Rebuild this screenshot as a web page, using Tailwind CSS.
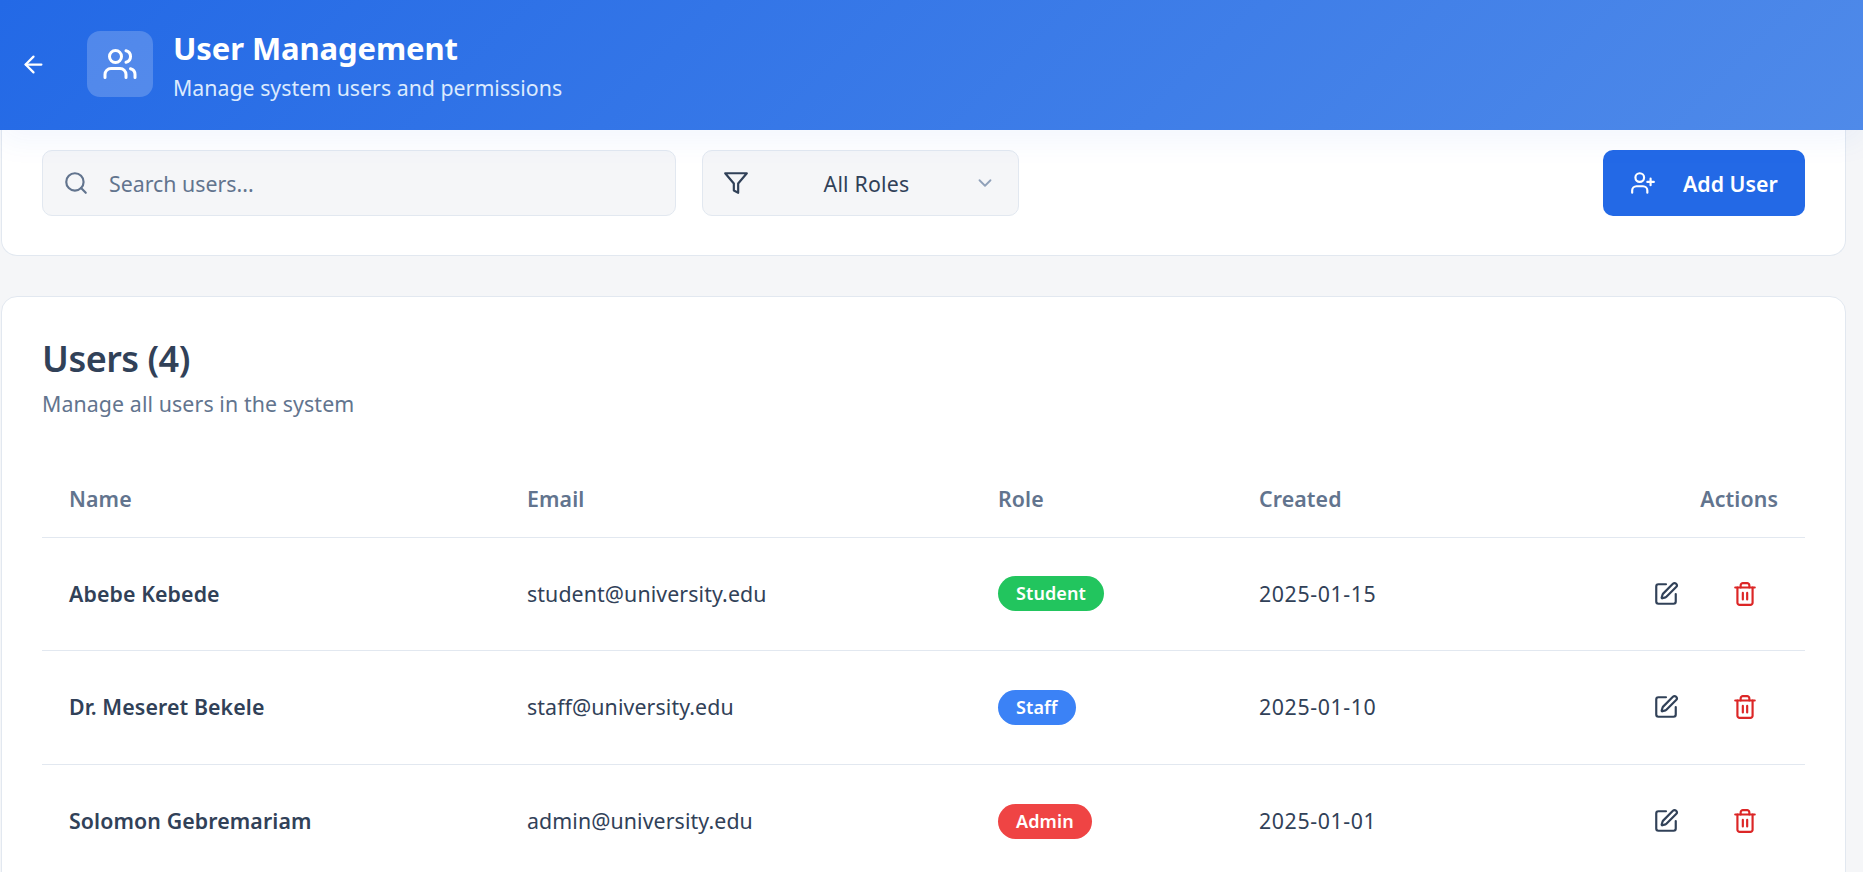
<!DOCTYPE html>
<html lang="en">
<head>
  <meta charset="UTF-8" />
  <title>User Management</title>
  <script src="https://cdn.jsdelivr.net/npm/@tailwindcss/browser@4"></script>
</head>
<body class="bg-[#f5f6f8] h-screen overflow-hidden font-['Noto_Sans',sans-serif] text-slate-700">
  <header class="relative z-10 h-[130px] pb-[2px] flex items-center bg-[linear-gradient(135deg,#2369e6,#4f8ae9)] shadow-[0_10px_30px_rgba(37,99,235,0.06)] text-white">
    <button class="w-[27px] ml-[20px] text-white">
      <svg class="w-[27px] h-[27px]" viewBox="0 0 24 24" fill="none" stroke="currentColor" stroke-width="2" stroke-linecap="round" stroke-linejoin="round"><path d="m12 19-7-7 7-7"/><path d="M19 12H5"/></svg>
    </button>
    <div class="ml-[40px] w-[66px] h-[66px] rounded-[13px] bg-white/20 flex items-center justify-center">
      <svg class="w-[36px] h-[36px]" viewBox="0 0 24 24" fill="none" stroke="currentColor" stroke-width="2" stroke-linecap="round" stroke-linejoin="round"><path d="M16 21v-2a4 4 0 0 0-4-4H6a4 4 0 0 0-4 4v2"/><circle cx="9" cy="7" r="4"/><path d="M22 21v-2a4 4 0 0 0-3-3.87"/><path d="M16 3.13a4 4 0 0 1 0 7.75"/></svg>
    </div>
    <div class="ml-[20px] pt-[3px]">
      <h1 class="text-[31px] leading-[38px] font-bold tracking-[-0.1px]">User Management</h1>
      <p class="text-[21.33px] leading-[30px] mt-[6px] text-[#dbeafe]">Manage system users and permissions</p>
    </div>
  </header>

  <main class="pl-[1px] pr-[17px]">
    <section class="bg-white border border-t-0 border-[#e2e8f0] rounded-b-[16px] h-[126px] pt-[20px] px-[40px] flex items-start">
      <div class="w-[634px] h-[66px] bg-[#f5f6f8] border border-[#e2e8f0] rounded-[10px] flex items-center pl-[20px]">
        <svg class="w-[26px] h-[26px] text-slate-500" viewBox="0 0 24 24" fill="none" stroke="currentColor" stroke-width="2" stroke-linecap="round" stroke-linejoin="round"><circle cx="11" cy="11" r="8"/><path d="m21 21-4.3-4.3"/></svg>
        <span class="ml-[20px] mt-[2px] text-[21.33px] text-slate-500">Search users...</span>
      </div>
      <div class="ml-[26px] w-[317px] h-[66px] bg-[#f5f6f8] border border-[#e2e8f0] rounded-[10px] flex items-center pl-[20px] pr-[22px]">
        <svg class="w-[26px] h-[26px]" viewBox="0 0 24 24" fill="none" stroke="currentColor" stroke-width="2" stroke-linecap="round" stroke-linejoin="round"><polygon points="22 3 2 3 10 12.46 10 19 14 21 14 12.46 22 3"/></svg>
        <span class="flex-1 mt-[2px] text-center text-[21.33px] pl-[10px] tracking-[0.2px]">All Roles</span>
        <svg class="w-[22px] h-[22px] text-slate-400" viewBox="0 0 24 24" fill="none" stroke="currentColor" stroke-width="2" stroke-linecap="round" stroke-linejoin="round"><path d="m6 9 6 6 6-6"/></svg>
      </div>
      <button class="ml-auto w-[202px] h-[66px] bg-[#2369e6] rounded-[10px] text-white flex items-center pl-[27px]">
        <svg class="w-[26px] h-[26px]" viewBox="0 0 24 24" fill="none" stroke="currentColor" stroke-width="2" stroke-linecap="round" stroke-linejoin="round"><path d="M16 21v-2a4 4 0 0 0-4-4H6a4 4 0 0 0-4 4v2"/><circle cx="9" cy="7" r="4"/><path d="M19 8v6"/><path d="M22 11h-6"/></svg>
        <span class="ml-[27px] mt-[2px] text-[21.33px] font-semibold">Add User</span>
      </button>
    </section>

    <section class="mt-[40px] bg-white border border-[#e2e8f0] rounded-[16px] h-[700px] pt-[40px] px-[40px]">
      <h2 class="text-[36px] leading-[44px] font-semibold tracking-[-0.5px]">Users (4)</h2>
      <p class="text-[21.33px] leading-[30px] mt-[8px] text-slate-500 tracking-[0.1px]">Manage all users in the system</p>

      <table class="mt-[42px] w-full table-fixed text-left text-[21.33px] tracking-[0.1px]">
        <colgroup>
          <col class="w-[458px]" />
          <col class="w-[471px]" />
          <col class="w-[261px]" />
          <col class="w-[300px]" />
          <col />
        </colgroup>
        <thead>
          <tr class="h-[76px] border-b border-[#e2e8f0] text-slate-500">
            <th class="pl-[27px] font-semibold">Name</th>
            <th class="pl-[27px] font-semibold">Email</th>
            <th class="pl-[27px] font-semibold">Role</th>
            <th class="pl-[27px] font-semibold">Created</th>
            <th class="pr-[27px] text-right font-semibold">Actions</th>
          </tr>
        </thead>
        <tbody>
          <tr class="h-[113px] border-b border-[#e2e8f0]">
            <td class="pl-[27px] font-semibold">Abebe Kebede</td>
            <td class="pl-[27px]">student@university.edu</td>
            <td class="pl-[27px]"><span class="inline-block rounded-full bg-[#22c55e] text-white text-[18px] leading-[35px] font-semibold px-[18px]">Student</span></td>
            <td class="pl-[27px] tracking-[0.6px]">2025-01-15</td>
            <td>
              <div class="flex justify-end gap-[53px] pr-[47px]">
                <svg class="w-[26px] h-[26px]" viewBox="0 0 24 24" fill="none" stroke="currentColor" stroke-width="2" stroke-linecap="round" stroke-linejoin="round"><path d="M12 3H5a2 2 0 0 0-2 2v14a2 2 0 0 0 2 2h14a2 2 0 0 0 2-2v-7"/><path d="M18.375 2.625a1 1 0 0 1 3 3l-9.013 9.014a2 2 0 0 1-.853.505l-2.873.84a.5.5 0 0 1-.62-.62l.84-2.873a2 2 0 0 1 .506-.852z"/></svg>
                <svg class="w-[26px] h-[26px] text-[#dc2626]" viewBox="0 0 24 24" fill="none" stroke="currentColor" stroke-width="2" stroke-linecap="round" stroke-linejoin="round"><path d="M3 6h18"/><path d="M19 6v14c0 1-1 2-2 2H7c-1 0-2-1-2-2V6"/><path d="M8 6V4c0-1 1-2 2-2h4c1 0 2 1 2 2v2"/><path d="M10 11v6"/><path d="M14 11v6"/></svg>
              </div>
            </td>
          </tr>
          <tr class="h-[114px] border-b border-[#e2e8f0]">
            <td class="pl-[27px] font-semibold">Dr. Meseret Bekele</td>
            <td class="pl-[27px]">staff@university.edu</td>
            <td class="pl-[27px]"><span class="inline-block rounded-full bg-[#3b82f6] text-white text-[18px] leading-[35px] font-semibold px-[18px]">Staff</span></td>
            <td class="pl-[27px] tracking-[0.6px]">2025-01-10</td>
            <td>
              <div class="flex justify-end gap-[53px] pr-[47px]">
                <svg class="w-[26px] h-[26px]" viewBox="0 0 24 24" fill="none" stroke="currentColor" stroke-width="2" stroke-linecap="round" stroke-linejoin="round"><path d="M12 3H5a2 2 0 0 0-2 2v14a2 2 0 0 0 2 2h14a2 2 0 0 0 2-2v-7"/><path d="M18.375 2.625a1 1 0 0 1 3 3l-9.013 9.014a2 2 0 0 1-.853.505l-2.873.84a.5.5 0 0 1-.62-.62l.84-2.873a2 2 0 0 1 .506-.852z"/></svg>
                <svg class="w-[26px] h-[26px] text-[#dc2626]" viewBox="0 0 24 24" fill="none" stroke="currentColor" stroke-width="2" stroke-linecap="round" stroke-linejoin="round"><path d="M3 6h18"/><path d="M19 6v14c0 1-1 2-2 2H7c-1 0-2-1-2-2V6"/><path d="M8 6V4c0-1 1-2 2-2h4c1 0 2 1 2 2v2"/><path d="M10 11v6"/><path d="M14 11v6"/></svg>
              </div>
            </td>
          </tr>
          <tr class="h-[114px] border-b border-[#e2e8f0]">
            <td class="pl-[27px] font-semibold">Solomon Gebremariam</td>
            <td class="pl-[27px]">admin@university.edu</td>
            <td class="pl-[27px]"><span class="inline-block rounded-full bg-[#ef4444] text-white text-[18px] leading-[35px] font-semibold px-[18px]">Admin</span></td>
            <td class="pl-[27px] tracking-[0.6px]">2025-01-01</td>
            <td>
              <div class="flex justify-end gap-[53px] pr-[47px]">
                <svg class="w-[26px] h-[26px]" viewBox="0 0 24 24" fill="none" stroke="currentColor" stroke-width="2" stroke-linecap="round" stroke-linejoin="round"><path d="M12 3H5a2 2 0 0 0-2 2v14a2 2 0 0 0 2 2h14a2 2 0 0 0 2-2v-7"/><path d="M18.375 2.625a1 1 0 0 1 3 3l-9.013 9.014a2 2 0 0 1-.853.505l-2.873.84a.5.5 0 0 1-.62-.62l.84-2.873a2 2 0 0 1 .506-.852z"/></svg>
                <svg class="w-[26px] h-[26px] text-[#dc2626]" viewBox="0 0 24 24" fill="none" stroke="currentColor" stroke-width="2" stroke-linecap="round" stroke-linejoin="round"><path d="M3 6h18"/><path d="M19 6v14c0 1-1 2-2 2H7c-1 0-2-1-2-2V6"/><path d="M8 6V4c0-1 1-2 2-2h4c1 0 2 1 2 2v2"/><path d="M10 11v6"/><path d="M14 11v6"/></svg>
              </div>
            </td>
          </tr>
        </tbody>
      </table>
    </section>
  </main>
</body>
</html>
